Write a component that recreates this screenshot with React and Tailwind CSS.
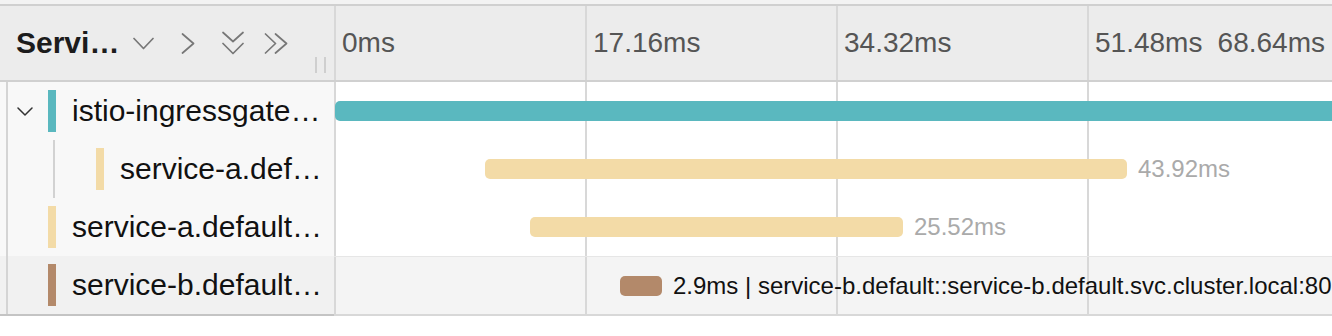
import React from "react";

const MS = 14.62;

const rows = [
  { name: "istio-ingressgateway", color: "#5ab8bf", depth: 0, open: true, start: 0, dur: 68.64 },
  { name: "service-a.default", color: "#f3dba7", depth: 1, start: 10.26, dur: 43.92, label: "43.92ms" },
  { name: "service-a.default.svc", color: "#f3dba7", depth: 0, start: 13.34, dur: 25.52, label: "25.52ms" },
  {
    name: "service-b.default.svc",
    color: "#b3896a",
    depth: 0,
    start: 19.49,
    dur: 2.9,
    label: "2.9ms | service-b.default::service-b.default.svc.cluster.local:80",
    hover: true,
  },
];

function Chevron({ w, h, d }) {
  return (
    <svg width={w} height={h} viewBox={`0 0 ${w} ${h}`} fill="none" stroke="#777" strokeWidth="1.7" strokeLinecap="round" strokeLinejoin="round">
      <path d={d} />
    </svg>
  );
}

function Cells() {
  return (
    <div className="flex h-full flex-1">
      <div className="w-[251px] h-full border-l-2 border-[#d8d8d8]" />
      <div className="w-[251px] h-full border-l-2 border-[#d8d8d8]" />
      <div className="w-[251px] h-full border-l-2 border-[#d8d8d8]" />
      <div className="flex-1 h-full border-l-2 border-[#d8d8d8]" />
    </div>
  );
}

function Row({ row }) {
  return (
    <div className={`flex h-[58px] ${row.hover ? "bg-[#f4f4f4]" : "bg-white"}`}>
      <div className={`w-[334px] h-full flex shrink-0 ${row.hover ? "bg-[#f1f1f1]" : "bg-[#f8f8f8]"}`}>
        <div className="w-[6px] h-full" />
        <div className="flex-1 min-w-0 h-full flex items-center border-l-2 border-[#d4d4d4]">
          <div className="w-[40px] h-full flex items-center pl-[9px]">
            {row.open && (
              <svg width="16" height="9" viewBox="0 0 16 9" fill="none" stroke="#333" strokeWidth="1.5" strokeLinecap="round" strokeLinejoin="round">
                <path d="M1 1l7 7 7-7" />
              </svg>
            )}
          </div>
          {row.depth === 1 && (
            <div className="w-[48px] h-full pl-[5px]">
              <div className="w-[2px] h-full bg-[#d2d2d2]" />
            </div>
          )}
          <div className="w-[8px] h-[42px] shrink-0" style={{ background: row.color }} />
          <div className="flex-1 min-w-0 pl-[16px] pr-[6px] truncate text-[30px] leading-none text-[#111] py-[4px]">
            {row.name}
          </div>
        </div>
      </div>
      <div className={`relative flex-1 h-full ${row.hover ? "border-t border-[#e6e6e6]" : ""}`}>
        <Cells />
        <div className="absolute inset-y-0 left-[1px] right-0 overflow-hidden flex items-center">
          <div className="shrink-0" style={{ width: Math.round(row.start * MS) }} />
          <div className="h-[20px] rounded-[5px] shrink-0" style={{ width: Math.round(row.dur * MS), background: row.color }} />
          {row.label && (
            <span className={`ml-[11px] whitespace-nowrap text-[24px] leading-none ${row.hover ? "text-[#111]" : "text-[#aaa]"}`}>
              {row.label}
            </span>
          )}
        </div>
      </div>
    </div>
  );
}

export default function App() {
  return (
    <div className="w-[1332px] h-[336px] overflow-hidden bg-white font-['Liberation_Sans',Arial,sans-serif]">
      <div className="h-[4px] bg-[#f3f3f3]" />
      <div className="h-[2px] bg-[#d0d0d0]" />
      <div className="flex h-[74px] bg-[#ececec]">
        <div className="w-[334px] shrink-0 h-full flex items-center pl-[16px]">
          <div className="w-[110px] truncate text-[30px] font-bold leading-none text-[#1c1c1c] py-[4px]">Service &amp; Operation</div>
          <div className="ml-[7px]">
            <Chevron w={21} h={13} d="M1 1.5l9.5 10 9.5-10" />
          </div>
          <div className="ml-[27px]">
            <Chevron w={14} h={21} d="M1.5 1l11 9.5-11 9.5" />
          </div>
          <div className="ml-[27px]">
            <Chevron w={22} h={24} d="M1 1.5l10 9 10-9M1 12.5l10 10 10-10" />
          </div>
          <div className="ml-[20px]">
            <Chevron w={24} h={21} d="M1.5 1l10 9.5-10 9.5M11.5 1l11 9.5-11 9.5" />
          </div>
          <div className="ml-[27px] self-end mb-[7px] flex gap-[7px]">
            <div className="w-[2px] h-[16px] bg-[#cfcfcf]" />
            <div className="w-[2px] h-[16px] bg-[#cfcfcf]" />
          </div>
        </div>
        <div className="flex-1 h-full text-[28px] leading-none text-[#555]">
          <div className="flex h-full">
            <div className="w-[251px] h-full border-l-2 border-[#d8d8d8] flex items-center pl-[6px]">0ms</div>
            <div className="w-[251px] h-full border-l-2 border-[#d8d8d8] flex items-center pl-[6px]">17.16ms</div>
            <div className="w-[251px] h-full border-l-2 border-[#d8d8d8] flex items-center pl-[6px]">34.32ms</div>
            <div className="flex-1 h-full border-l-2 border-[#d8d8d8] flex items-center justify-between pl-[6px] pr-[7px]">
              <span>51.48ms</span>
              <span>68.64ms</span>
            </div>
          </div>
        </div>
      </div>
      <div className="h-[2px] bg-[#d0d0d0]" />
      {rows.map((row) => (
        <Row key={row.name + row.depth} row={row} />
      ))}
      <div className="flex h-[2px]">
        <div className="w-[334px] bg-[#c4c4c4]" />
        <div className="flex-1 bg-[#d8d8d8]" />
      </div>
    </div>
  );
}
